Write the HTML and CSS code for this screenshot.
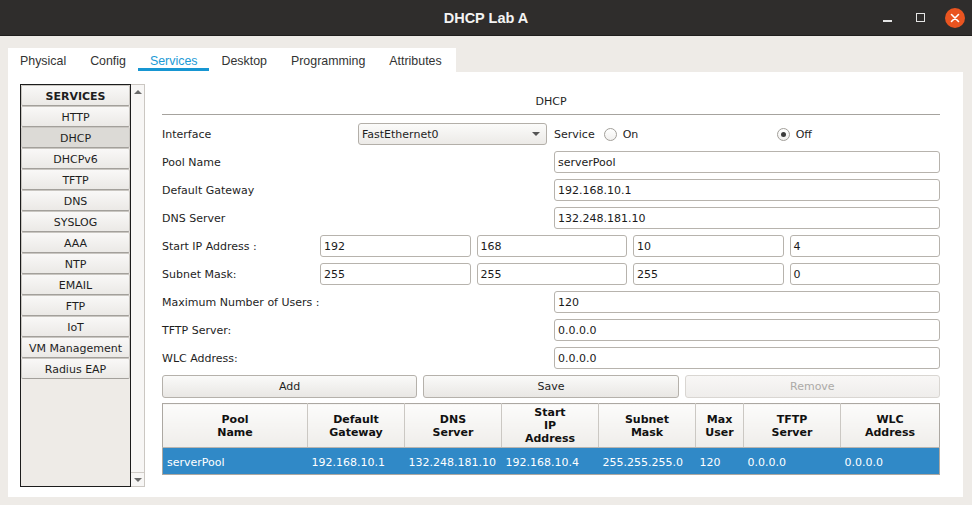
FILE: index.html
```html
<!DOCTYPE html>
<html lang="en">
<head>
<meta charset="utf-8">
<title>DHCP Lab A</title>
<link rel="stylesheet" href="styles.css">
</head>
<body>
<div class="window">
  <header class="titlebar">
    <div class="tb-spacer"></div>
    <div class="title">DHCP Lab A</div>
    <div class="controls">
      <span class="ctl-min"></span>
      <span class="ctl-max"></span>
      <span class="ctl-close">
        <svg width="20" height="20" viewBox="0 0 20 20"><path d="M6.5 6.5 L13.5 13.5 M13.5 6.5 L6.5 13.5" stroke="#ffffff" stroke-width="1.6" stroke-linecap="round"/></svg>
      </span>
    </div>
  </header>

  <div class="frame">
    <nav class="tabs">
      <span class="tab">Physical</span>
      <span class="tab">Config</span>
      <span class="tab active">Services</span>
      <span class="tab">Desktop</span>
      <span class="tab">Programming</span>
      <span class="tab">Attributes</span>
    </nav>

    <main class="panel">
      <aside class="sidebar">
        <div class="list">
          <div class="item head">SERVICES</div>
          <div class="item">HTTP</div>
          <div class="item selected">DHCP</div>
          <div class="item">DHCPv6</div>
          <div class="item">TFTP</div>
          <div class="item">DNS</div>
          <div class="item">SYSLOG</div>
          <div class="item">AAA</div>
          <div class="item">NTP</div>
          <div class="item">EMAIL</div>
          <div class="item">FTP</div>
          <div class="item">IoT</div>
          <div class="item">VM Management</div>
          <div class="item">Radius EAP</div>
        </div>
        <div class="scrollbar">
          <div class="sb-btn sb-up"><span class="tri-up"></span></div>
          <div class="sb-track"></div>
          <div class="sb-btn sb-down"><span class="tri-down"></span></div>
        </div>
      </aside>

      <section class="form">
        <div class="form-title">DHCP</div>
        <div class="rows">
          <div class="row">
            <span class="label label-iface">Interface</span>
            <div class="select"><span>FastEthernet0</span><span class="tri-down dark"></span></div>
            <div class="service">
              <span class="service-label">Service</span>
              <span class="radio-opt opt-on"><span class="radio"></span><span>On</span></span>
              <span class="radio-opt"><span class="radio checked"></span><span>Off</span></span>
            </div>
          </div>
          <div class="row">
            <span class="label">Pool Name</span>
            <div class="input wide">serverPool</div>
          </div>
          <div class="row">
            <span class="label">Default Gateway</span>
            <div class="input wide">192.168.10.1</div>
          </div>
          <div class="row">
            <span class="label">DNS Server</span>
            <div class="input wide">132.248.181.10</div>
          </div>
          <div class="row">
            <span class="label label-quad">Start IP Address :</span>
            <div class="quad">
              <div class="input">192</div>
              <div class="input">168</div>
              <div class="input">10</div>
              <div class="input">4</div>
            </div>
          </div>
          <div class="row">
            <span class="label label-quad">Subnet Mask:</span>
            <div class="quad">
              <div class="input">255</div>
              <div class="input">255</div>
              <div class="input">255</div>
              <div class="input">0</div>
            </div>
          </div>
          <div class="row">
            <span class="label">Maximum Number of Users :</span>
            <div class="input wide">120</div>
          </div>
          <div class="row">
            <span class="label">TFTP Server:</span>
            <div class="input wide">0.0.0.0</div>
          </div>
          <div class="row">
            <span class="label">WLC Address:</span>
            <div class="input wide">0.0.0.0</div>
          </div>
          <div class="row buttons">
            <div class="btn">Add</div>
            <div class="btn">Save</div>
            <div class="btn disabled">Remove</div>
          </div>
        </div>

        <table class="pools">
          <thead>
            <tr>
              <th>Pool<br>Name</th>
              <th>Default<br>Gateway</th>
              <th>DNS<br>Server</th>
              <th>Start<br>IP<br>Address</th>
              <th>Subnet<br>Mask</th>
              <th>Max<br>User</th>
              <th>TFTP<br>Server</th>
              <th>WLC<br>Address</th>
            </tr>
          </thead>
          <tbody>
            <tr class="sel">
              <td>serverPool</td>
              <td>192.168.10.1</td>
              <td>132.248.181.10</td>
              <td>192.168.10.4</td>
              <td>255.255.255.0</td>
              <td>120</td>
              <td>0.0.0.0</td>
              <td>0.0.0.0</td>
            </tr>
          </tbody>
        </table>
      </section>
    </main>
  </div>
</div>
</body>
</html>
```

FILE: styles.css
```css
* { box-sizing: border-box; }

html, body {
  margin: 0;
  padding: 0;
}

body {
  width: 972px;
  height: 505px;
  overflow: hidden;
  background: #eeebe7;
  font-family: "DejaVu Sans", "Liberation Sans", sans-serif;
  font-size: 11px;
  color: #1e1e1e;
}

/* ---------- title bar ---------- */
.titlebar {
  height: 36px;
  background: #2f2d2c;
  display: grid;
  grid-template-columns: 1fr auto 1fr;
  align-items: center;
  border-bottom: 1px solid #1f1e1d;
}

.title {
  font-family: "Liberation Sans", Arial, sans-serif;
  font-weight: bold;
  font-size: 14.5px;
  color: #f3f3f3;
  padding-top: 1px;
}

.controls {
  justify-self: end;
  display: flex;
  align-items: center;
  padding-right: 7px;
}

.ctl-min {
  width: 9px;
  height: 2px;
  background: #e4e4e4;
  margin-top: 6px;
  margin-right: 24px;
}

.ctl-max {
  width: 9px;
  height: 9px;
  border: 1px solid #e4e4e4;
  margin-right: 20px;
}

.ctl-close {
  width: 20px;
  height: 20px;
  border-radius: 50%;
  background: #e95420;
  display: flex;
}

/* ---------- frame ---------- */
.frame {
  padding: 12px 9px 8px 8px;
}

.tabs {
  width: 448px;
  height: 24px;
  background: #ffffff;
  display: flex;
}

.tab {
  height: 24px;
  padding: 2px 12px 0 12px;
  display: flex;
  align-items: center;
  font-family: "Liberation Sans", Arial, sans-serif;
  font-size: 12.4px;
  color: #333333;
}

.tab.active {
  color: #1b9ad6;
  background: linear-gradient(#1796d2, #1796d2) no-repeat;
  background-size: 100% 3px;
  background-position: 0 20px;
}

.panel {
  width: 955px;
  height: 425px;
  background: #ffffff;
  display: flex;
  gap: 17px;
  padding: 12px 23px 0 12px;
}

/* ---------- sidebar ---------- */
.sidebar {
  width: 125px;
  height: 403px;
  display: flex;
  flex: none;
}

.list {
  width: 111px;
  height: 100%;
  border: 1px solid #1c1c1c;
  background: #eeebe7;
  display: flex;
  flex-direction: column;
}

.item {
  height: 21px;
  flex: none;
  display: flex;
  align-items: center;
  justify-content: center;
  padding-top: 1px;
  border: 1px solid #c9c6c1;
  border-bottom-color: #a3a09b;
  border-radius: 2px;
  background: linear-gradient(#f9f8f7, #ebe9e6);
  color: #1e1e1e;
  white-space: nowrap;
}

.item.head {
  font-weight: bold;
}

.item.selected {
  background: #dcdad6;
}

.scrollbar {
  width: 14px;
  height: 100%;
  border: 1px solid #cbc7c2;
  border-left: none;
  background: #f7f6f5;
  display: flex;
  flex-direction: column;
}

.sb-btn {
  height: 13px;
  display: flex;
  align-items: center;
  justify-content: center;
}

.sb-down {
  height: 14px;
  border-top: 1px solid #cfcbc6;
}

.sb-track {
  flex: 1;
}

.tri-up {
  width: 0;
  height: 0;
  border-left: 4px solid transparent;
  border-right: 4px solid transparent;
  border-bottom: 4px solid #6a6a6a;
}

.tri-down {
  width: 0;
  height: 0;
  border-left: 4px solid transparent;
  border-right: 4px solid transparent;
  border-top: 4px solid #6a6a6a;
}

.tri-down.dark {
  border-top-color: #555555;
  margin-right: 6px;
}

/* ---------- form ---------- */
.form {
  flex: 1;
  display: flex;
  flex-direction: column;
}

.form-title {
  height: 31px;
  padding-top: 4px;
  display: flex;
  align-items: center;
  justify-content: center;
  border-bottom: 1px solid #a6a39e;
}

.rows {
  margin-top: 5px;
  display: flex;
  flex-direction: column;
}

.row {
  height: 28px;
  display: flex;
  align-items: center;
}

.label {
  flex: 1;
  white-space: nowrap;
}

.label-iface {
  flex: none;
  width: 196px;
}

.label-quad {
  flex: none;
  width: 158px;
}

.input {
  height: 22px;
  border: 1px solid #b7b3ad;
  border-radius: 3px;
  background: #ffffff;
  padding-left: 3px;
  display: flex;
  align-items: center;
  color: #1a1a1a;
}

.input.wide {
  width: 386px;
  flex: none;
}

.quad {
  flex: 1;
  display: flex;
  gap: 6px;
}

.quad .input {
  flex: 1;
}

.select {
  width: 189px;
  height: 22px;
  flex: none;
  border: 1px solid #b3afa9;
  border-radius: 3px;
  background: linear-gradient(#fbfbfa, #eceae7);
  padding-left: 3px;
  display: flex;
  align-items: center;
  justify-content: space-between;
}

.service {
  margin-left: 7px;
  display: flex;
  align-items: center;
}

.service-label {
  margin-right: 9px;
}

.radio-opt {
  display: flex;
  align-items: center;
  gap: 6px;
}

.radio-opt.opt-on {
  width: 173px;
}

.radio {
  width: 13px;
  height: 13px;
  border-radius: 50%;
  border: 1px solid #a29f9a;
  background: linear-gradient(#ffffff, #f1f0ee);
  display: flex;
  align-items: center;
  justify-content: center;
}

.radio.checked::before {
  content: "";
  width: 5px;
  height: 5px;
  border-radius: 50%;
  background: #3b3b3b;
}

.buttons {
  gap: 6px;
}

.btn {
  flex: 1;
  height: 23px;
  border: 1px solid #b5b1ab;
  border-radius: 3px;
  background: linear-gradient(#fafaf9, #e9e7e4);
  display: flex;
  align-items: center;
  justify-content: center;
  color: #1e1e1e;
}

.btn.disabled {
  color: #acaaa7;
  border-color: #d9d6d2;
  background: linear-gradient(#f8f7f6, #efedeb);
}

/* ---------- table ---------- */
.pools {
  margin-top: 3px;
  width: 778px;
  border-collapse: collapse;
  table-layout: fixed;
  border: 1px solid #aca8a2;
  font-size: 11px;
}

.pools th {
  height: 44px;
  padding: 0 2px;
  font-weight: bold;
  line-height: 13px;
  text-align: center;
  vertical-align: middle;
  color: #111111;
  background: linear-gradient(#fcfcfb, #efedea);
  border-right: 1px solid #cbc8c3;
  border-bottom: 1px solid #b9b5b0;
}

.pools th:nth-child(1) { width: 145px; }
.pools th:nth-child(2) { width: 97px; }
.pools th:nth-child(3) { width: 97px; }
.pools th:nth-child(4) { width: 97px; }
.pools th:nth-child(5) { width: 97px; }
.pools th:nth-child(6) { width: 48px; }
.pools th:nth-child(7) { width: 97px; }
.pools th:nth-child(8) { width: 99px; border-right: none; }

.pools td {
  height: 27px;
  padding: 3px 0 0 4px;
  white-space: nowrap;
  overflow: hidden;
}

.pools tr.sel td {
  background: #3089c7;
  color: #ffffff;
}
```
